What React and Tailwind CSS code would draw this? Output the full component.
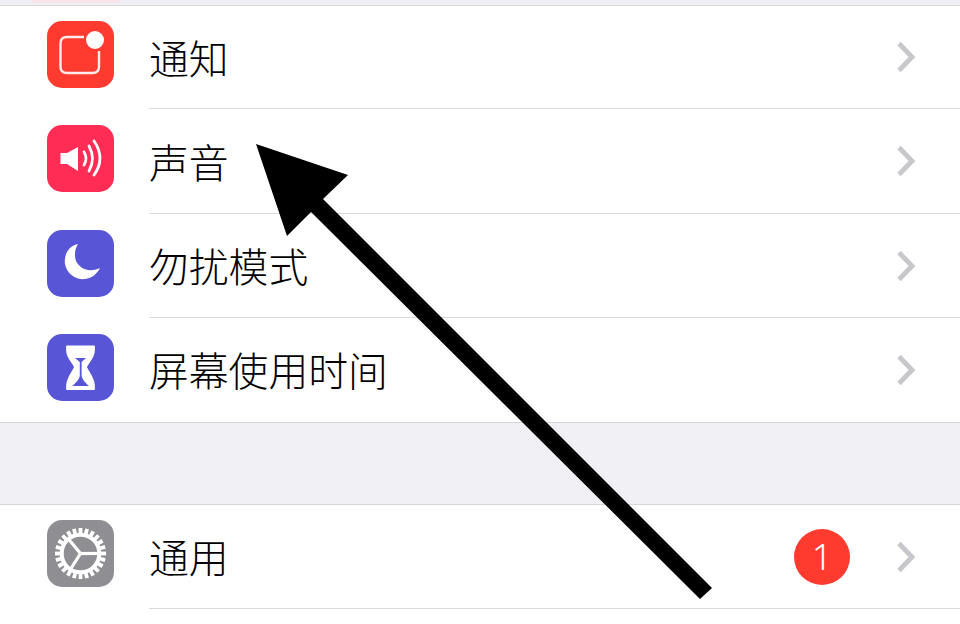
import React from "react";

const Chevron = () => (
  <svg width="20" height="32" viewBox="0 0 20 32" className="shrink-0">
    <path d="M3 2.5 L16 16 L3 29.5" fill="none" stroke="#c7c7cc" strokeWidth="4.8" />
  </svg>
);

const Notif = () => (
  <svg viewBox="0 0 67 67" className="w-full h-full">
    <path d="M37 16 H20 Q13.5 16 13.5 22.5 V45.5 Q13.5 52 20 52 H45.5 Q52 52 52 45.5 V30" fill="none" stroke="#fff" strokeOpacity="0.9" strokeWidth="2.4" />
    <circle cx="48" cy="19" r="9" fill="#fff" />
  </svg>
);

const Sound = () => (
  <svg viewBox="0 0 67 67" className="w-full h-full">
    <path d="M13.5 28 H20 L31 22 V46 L20 39 H13.5 Z" fill="#fff" />
    <g fill="none" stroke="#fff" strokeWidth="2.8" strokeLinecap="round">
      <path d="M37 27 Q41 33.5 37 40" />
      <path d="M42 21 Q49 33.5 42 46" />
      <path d="M47 16 Q59 33.5 47 50" />
    </g>
  </svg>
);

const Moon = () => (
  <svg viewBox="0 0 67 67" className="w-full h-full">
    <path d="M31 14 C20 16 17 27 18 34 C20 45 30 50 38 49 C45 48 50 44 53 38 C42 43 33 39 29 31 C27 25 28 19 31 14 Z" fill="#fff" />
  </svg>
);

const Hourglass = () => (
  <svg viewBox="0 0 67 67" className="w-full h-full">
    <path d="M20 12.5 H47 V16 C47 24 41 28 39 33 C41 38 47 44 47 52 V55 H20 V52 C20 44 26 38 28 33 C26 28 20 24 20 16 Z" fill="#fff" stroke="#fff" strokeWidth="1.8" strokeLinejoin="round" />
    <path d="M28 24 H39 L34.6 28 V42 C36 47 39 49 42 52 H25.5 C28 49 31.5 47 32.8 42 V28 Z" fill="#5856d6" />
  </svg>
);

const teeth = Array.from({ length: 24 }, (_, i) => i * 15);

const Gear = () => (
  <svg viewBox="0 0 67 67" className="w-full h-full">
    <g fill="#fff">
      {teeth.map((a) => (
        <rect key={a} x="31.6" y="8" width="3.8" height="7" transform={`rotate(${a} 33.5 33.5)`} />
      ))}
    </g>
    <circle cx="33.5" cy="33.5" r="18.8" fill="none" stroke="#fff" strokeWidth="4" />
    <g stroke="#fff" strokeWidth="3.2" fill="none">
      <path d="M33.5 33.5 L21 18.5" />
      <path d="M33.5 33.5 L52 33.5" />
      <path d="M33.5 33.5 L23 50" />
    </g>
  </svg>
);

const Row = ({ color, icon, label, badge, divider = true, h, shift = "mb-[6px]" }) => (
  <div className={`flex items-center bg-white pl-[46.5px] ${h}`}>
    <div className={`w-[67px] h-[67px] rounded-[15px] shrink-0 ${color} ${shift}`}>{icon}</div>
    <div className={`ml-[35.5px] flex-1 self-stretch flex items-center pr-[44px] border-b-[1.5px] ${divider ? "border-[#d9d9dc]" : "border-transparent"}`}>
      <span className="flex-1 mb-[1px] text-[39.8px] leading-none font-light text-black font-['Noto_Sans_CJK_SC',sans-serif]">{label}</span>
      {badge && (
        <span className="w-[56px] h-[56px] mr-[46px] rounded-full bg-[#ff3b30] text-white text-[36px] font-light flex items-center justify-center font-['Noto_Sans',sans-serif]">
          {badge}
        </span>
      )}
      <Chevron />
    </div>
  </div>
);

export default function App() {
  return (
    <div className="relative w-[960px] h-[624px] overflow-hidden bg-white">
      <div className="h-[6px] bg-[#efeff4] border-b-[1.5px] border-[#d6d6da]">
        <div className="ml-[32px] w-[88px] h-[3px] bg-[#f6e6ea]" />
      </div>
      <Row h="h-[103px]" color="bg-[#ff3b30]" icon={<Notif />} label="通知" />
      <Row h="h-[105px]" color="bg-[#ff2d55]" icon={<Sound />} label="声音" />
      <Row h="h-[104px]" color="bg-[#5856d6]" icon={<Moon />} label="勿扰模式" />
      <Row h="h-[104px]" color="bg-[#5856d6]" icon={<Hourglass />} label="屏幕使用时间" divider={false} />
      <div className="h-[83px] bg-[#efeff4] border-y-[1.5px] border-[#d6d6da]" />
      <Row h="h-[104px]" color="bg-[#8e8e93]" icon={<Gear />} label="通用" badge="1" shift="mb-[8px]" />
      <svg className="absolute left-0 top-0 pointer-events-none" width="960" height="624" viewBox="0 0 960 624">
        <path d="M256 144 L348 175 L323 199 L712 588 L700 599 L311 212 L287 236 Z" fill="#000" />
      </svg>
    </div>
  );
}
